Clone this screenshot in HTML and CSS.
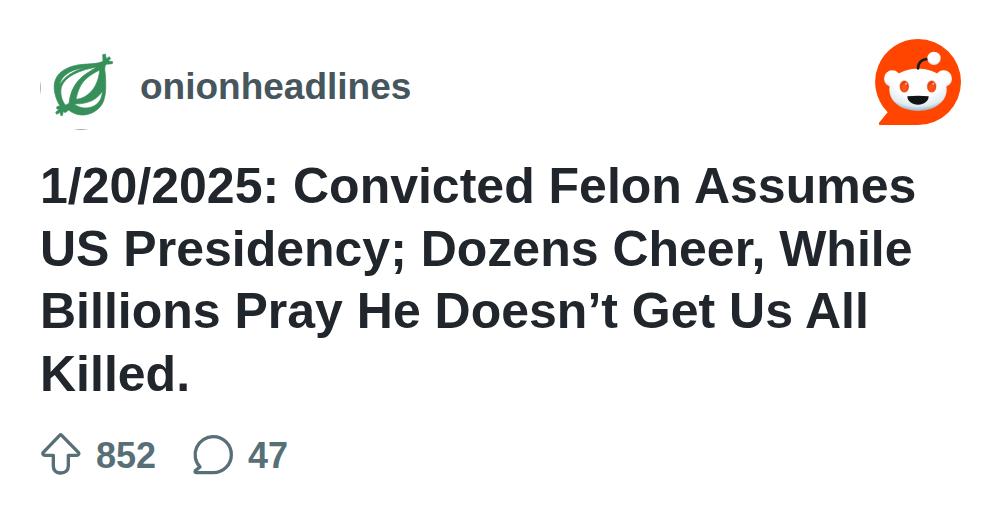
FILE: index.html
```html
<!DOCTYPE html>
<html lang="en">
<head>
    <meta charset="utf-8">
    <title>onionheadlines</title>
    <link rel="stylesheet" href="styles.css">
</head>
<body>
    <article class="card">
        <header class="card-header">
            <div class="community">
                <svg class="avatar" viewBox="30 24 258 258" aria-hidden="true">
                    <path fill="#8a8a8a" d="M30 134Q34 155 30 176ZM130 279H176Q153 284 130 279Z"/>
                    <path fill="#37905a" stroke="#37905a" stroke-width="2" fill-rule="evenodd" d="M218 56L226 54L229 68L238 62L242 68L235 75L248 77L247 83L228 85C223 93 224 101 226 115C228 145 229 174 220 197C208 224 179 238 154 237C138 236 125 230 116 222L105 230L100 226L97 239L92 238L91 229L80 235L77 229L86 221L79 217L82 211L90 210C76 188 67 153 76 132C85 105 116 91 148 86C178 83 204 84 219 76ZM88 148C94 119 120 101 162 95C127 107 103 122 88 148ZM94 154C103 128 132 105 202 93C153 119 124 143 117 202L107 208C95 194 90 173 94 154ZM209 102C164 125 148 143 138 190C174 187 205 153 209 102ZM217 166C200 191 177 204 133 204C150 219 178 220 198 206C211 196 216 184 217 166Z"/>
                </svg>
                <span class="community-name">onionheadlines</span>
            </div>
            <svg class="logo" viewBox="27 27 258 258" role="img" aria-label="Reddit">
                <defs>
                    <radialGradient id="face" cx="50%" cy="25%" r="75%">
                        <stop offset="0.55" stop-color="#fff"/>
                        <stop offset="0.85" stop-color="#e1ebf2"/>
                        <stop offset="1" stop-color="#9aafc0"/>
                    </radialGradient>
                    <radialGradient id="ear" cx="50%" cy="35%" r="70%">
                        <stop offset="0.6" stop-color="#fff"/>
                        <stop offset="1" stop-color="#d5e0e8"/>
                    </radialGradient>
                    <radialGradient id="eye" cx="50%" cy="60%" r="60%">
                        <stop offset="0.4" stop-color="#ff5418"/>
                        <stop offset="1" stop-color="#d52c05"/>
                    </radialGradient>
                </defs>
                <path fill="#ff4500" d="M156 27A129 129 0 0 1 156 285H43C38 285 37 280 41 276L65 247A129 129 0 0 1 156 27Z"/>
                <circle fill="url(#ear)" cx="79" cy="146" r="25"/>
                <circle fill="url(#ear)" cx="233" cy="146" r="25"/>
                <path fill="url(#face)" d="M156 116C204 116 242 140 242 178C242 216 205 243 156 243C107 243 70 216 70 178C70 140 108 116 156 116Z"/>
                <path fill="none" stroke="#181c1f" stroke-width="8" stroke-linecap="round" d="M156 115C157 98 167 87 187 87"/>
                <circle fill="url(#ear)" cx="204" cy="85" r="20"/>
                <ellipse fill="#f6b8a7" cx="115" cy="169" rx="15" ry="19"/>
                <ellipse fill="#f6b8a7" cx="197" cy="169" rx="15" ry="19"/>
                <ellipse fill="url(#eye)" cx="115" cy="170" rx="13" ry="17"/>
                <ellipse fill="url(#eye)" cx="197" cy="170" rx="13" ry="17"/>
                <circle fill="#ffc5a8" cx="120" cy="161" r="3"/>
                <circle fill="#ffc5a8" cx="202" cy="161" r="3"/>
                <path fill="#101416" d="M124 199Q156 195 188 199C188 214 174 224 156 224C138 224 124 214 124 199Z"/>
            </svg>
        </header>

        <h1 class="title">1/20/2025: Convicted Felon Assumes US Presidency; Dozens Cheer, While Billions Pray He Doesn’t Get Us All Killed.</h1>

        <footer class="stats">
            <div class="stat">
                <svg class="stat-icon" viewBox="30 39 126 126" aria-hidden="true">
                    <path d="M89 46Q92 43 95 46L145 97C148 101 146 106 140 106H115V138C115 152 105 159 92 159C79 159 70 152 70 138V106H45C39 106 37 101 40 97Z"/>
                </svg>
                <span class="stat-value">852</span>
            </div>
            <div class="stat">
                <svg class="stat-icon" viewBox="486 39 126 126" aria-hidden="true">
                    <path d="M550 50A54 54 0 0 1 550 158H499C494 158 494 154 497 151L510 141A54 54 0 0 1 550 50Z"/>
                </svg>
                <span class="stat-value">47</span>
            </div>
        </footer>
    </article>
</body>
</html>
```

FILE: styles.css
```css
body {
    margin: 0;
    background-color: #fff;
    font-family: "Liberation Sans", Arial, sans-serif;
    font-weight: bold;
}

.card {
    padding: 39px 39px 39px 40px;
}

.card-header {
    display: flex;
    justify-content: space-between;
    align-items: flex-start;
}

.community {
    display: flex;
    align-items: center;
    gap: 14px;
    padding-top: 5px;
}

.avatar,
.logo {
    display: block;
    width: 86px;
    height: 86px;
}

.community-name {
    color: #47555c;
    font-size: 37px;
}

.title {
    margin: 25px 0 26px;
    color: #20262b;
    font-size: 50px;
    line-height: 1.25;
}

.stats {
    display: flex;
    gap: 36px;
}

.stat {
    display: flex;
    align-items: center;
    gap: 14px;
    color: #576f76;
    font-size: 36px;
}

.stat-value {
    padding-top: 4px;
}

.stat-icon {
    width: 42px;
    height: 42px;
    fill: none;
    stroke: currentColor;
    stroke-width: 10;
    stroke-linejoin: round;
}
```
